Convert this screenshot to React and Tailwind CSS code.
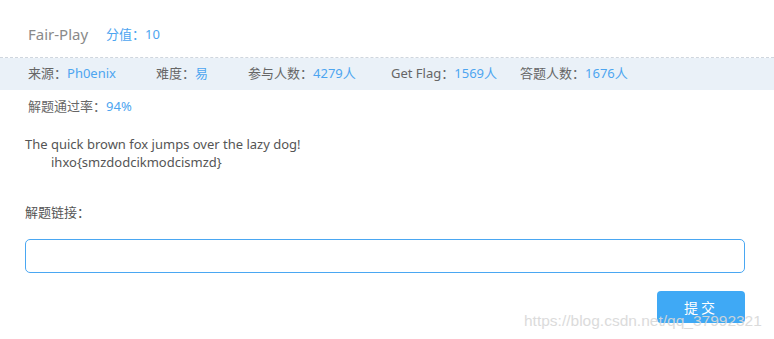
export default function App() {
  const font = { fontFamily: '"Noto Sans", "Noto Sans CJK SC", sans-serif' };
  return (
    <div className="relative w-[774px] h-[339px] overflow-hidden bg-white" style={font}>
      <div className="flex items-center h-[57px] pl-[28px] gap-[18px] pt-[12px]">
        <span className="text-[15px] text-[#8a8a8a]">Fair-Play</span>
        <span className="text-[13px] text-[#4da5f0]">分值：10</span>
      </div>
      <div className="border-t border-dashed border-[#cfd6de]" />
      <div className="flex items-center h-[32px] bg-[#eaf1f8] pl-[28px] text-[13px] text-[#666]">
        <span className="w-[128px]">来源：<span className="text-[#4da5f0]">Ph0enix</span></span>
        <span className="w-[92px]">难度：<span className="text-[#4da5f0]">易</span></span>
        <span className="w-[143px]">参与人数：<span className="text-[#4da5f0]">4279人</span></span>
        <span className="w-[129px]">Get Flag：<span className="text-[#4da5f0]">1569人</span></span>
        <span>答题人数：<span className="text-[#4da5f0]">1676人</span></span>
      </div>
      <div className="pl-[28px] pt-[6px] text-[13px] text-[#666] leading-[20px]">
        解题通过率：<span className="text-[#4da5f0]">94%</span>
      </div>
      <div className="pl-[25px] pt-[19px] text-[13px] text-[#555] leading-[18px]">
        <div>The quick brown fox jumps over the lazy dog!</div>
        <div className="pl-[26px]">ihxo{"{"}smzdodcikmodcismzd{"}"}</div>
      </div>
      <div className="pl-[25px] pt-[32px] text-[13px] text-[#555] leading-[18px]">解题链接：</div>
      <div className="px-[25px] pt-[18px]">
        <input className="block w-[720px] h-[34px] rounded-[5px] border border-[#4aa7f2] outline-none" />
      </div>
      <div className="flex justify-end pr-[29px] pt-[18px]">
        <button className="w-[88px] h-[32px] rounded-[4px] bg-[#3fa9f5] text-white text-[14px] tracking-[3px]">提交</button>
      </div>
      <div
        className="absolute left-[524px] top-[309px] text-[15.5px] text-[#d8d8d8] opacity-90"
        style={{ fontFamily: '"Liberation Sans", Arial, sans-serif' }}
      >
        https://blog.csdn.net/qq_37992321
      </div>
    </div>
  );
}
